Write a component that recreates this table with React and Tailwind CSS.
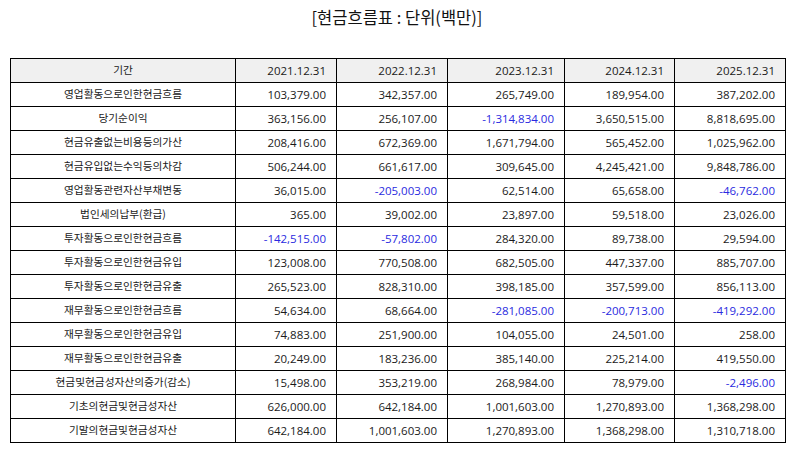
import React from "react";

const rows = [
  ["영업활동으로인한현금흐름", "103,379.00", "342,357.00", "265,749.00", "189,954.00", "387,202.00"],
  ["당기순이익", "363,156.00", "256,107.00", ["-1,314,834.00"], "3,650,515.00", "8,818,695.00"],
  ["현금유출없는비용등의가산", "208,416.00", "672,369.00", "1,671,794.00", "565,452.00", "1,025,962.00"],
  ["현금유입없는수익등의차감", "506,244.00", "661,617.00", "309,645.00", "4,245,421.00", "9,848,786.00"],
  ["영업활동관련자산부채변동", "36,015.00", ["-205,003.00"], "62,514.00", "65,658.00", ["-46,762.00"]],
  ["법인세의납부(환급)", "365.00", "39,002.00", "23,897.00", "59,518.00", "23,026.00"],
  ["투자활동으로인한현금흐름", ["-142,515.00"], ["-57,802.00"], "284,320.00", "89,738.00", "29,594.00"],
  ["투자활동으로인한현금유입", "123,008.00", "770,508.00", "682,505.00", "447,337.00", "885,707.00"],
  ["투자활동으로인한현금유출", "265,523.00", "828,310.00", "398,185.00", "357,599.00", "856,113.00"],
  ["재무활동으로인한현금흐름", "54,634.00", "68,664.00", ["-281,085.00"], ["-200,713.00"], ["-419,292.00"]],
  ["재무활동으로인한현금유입", "74,883.00", "251,900.00", "104,055.00", "24,501.00", "258.00"],
  ["재무활동으로인한현금유출", "20,249.00", "183,236.00", "385,140.00", "225,214.00", "419,550.00"],
  ["현금및현금성자산의증가(감소)", "15,498.00", "353,219.00", "268,984.00", "78,979.00", ["-2,496.00"]],
  ["기초의현금및현금성자산", "626,000.00", "642,184.00", "1,001,603.00", "1,270,893.00", "1,368,298.00"],
  ["기말의현금및현금성자산", "642,184.00", "1,001,603.00", "1,270,893.00", "1,368,298.00", "1,310,718.00"],
];

const headers = ["2021.12.31", "2022.12.31", "2023.12.31", "2024.12.31", "2025.12.31"];

const numFont = { fontFamily: '"Open Sans", "Noto Sans CJK KR", sans-serif' };

export default function App() {
  return (
    <div
      className="w-[794px] h-[452px] bg-white text-[#1a1a1a]"
      style={{ fontFamily: '"Noto Sans CJK KR", "Noto Sans", sans-serif' }}
    >
      <div className="h-[58px] pt-[6px] text-center text-[16.5px] leading-[22px] text-[#111]">
        [현금흐름표 : 단위(백만)]
      </div>
      <table className="ml-[10px] w-[775px] table-fixed border-collapse">
        <colgroup>
          <col className="w-[225px]" />
          <col className="w-[101px]" />
          <col className="w-[111px]" />
          <col className="w-[117px]" />
          <col className="w-[110px]" />
          <col className="w-[111px]" />
        </colgroup>
        <thead>
          <tr className="h-[24px] bg-[#f0f0f0]">
            <th className="border border-black font-normal text-center text-[10.7px] p-0">기간</th>
            {headers.map((h) => (
              <th
                key={h}
                className="border border-black font-normal text-right text-[11.5px] pr-[10px] p-0"
                style={numFont}
              >
                {h}
              </th>
            ))}
          </tr>
        </thead>
        <tbody>
          {rows.map((r) => (
            <tr key={r[0]} className="h-[24px]">
              <td className="border border-black text-center text-[10.7px] p-0">{r[0]}</td>
              {r.slice(1).map((v, i) => {
                const neg = Array.isArray(v);
                return (
                  <td
                    key={i}
                    className={
                      neg
                        ? "border border-black text-right text-[11.5px] pr-[10px] p-0 text-[#2a2ae0]"
                        : "border border-black text-right text-[11.5px] pr-[10px] p-0"
                    }
                    style={numFont}
                  >
                    {neg ? v[0] : v}
                  </td>
                );
              })}
            </tr>
          ))}
        </tbody>
      </table>
    </div>
  );
}
